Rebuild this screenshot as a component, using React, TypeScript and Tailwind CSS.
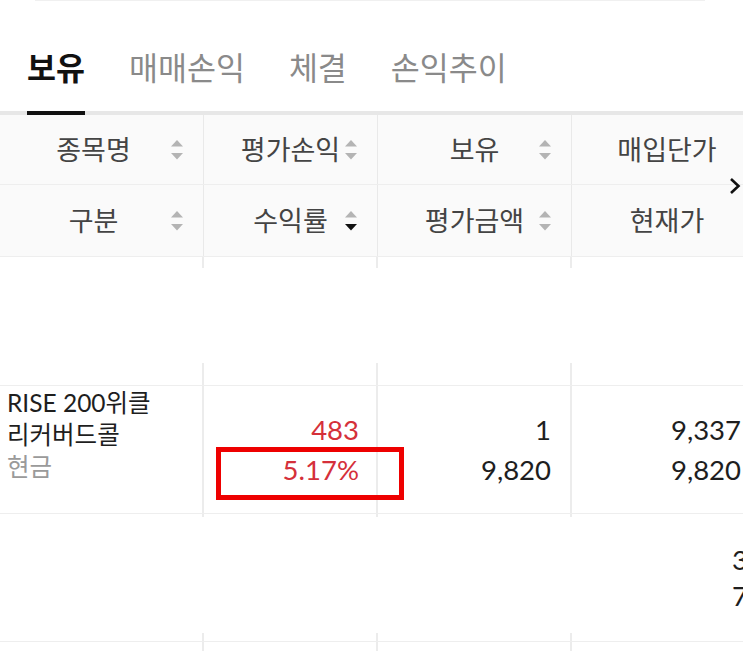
import React from "react";

const FONT = { fontFamily: "Lato, 'Noto Sans CJK KR', sans-serif" };

const tabs = ["보유", "매매손익", "체결", "손익추이"];

function SortIcon({ active = false }: { active?: boolean }) {
  return (
    <svg width="12" height="20" viewBox="0 0 12 20" className="block">
      <polygon points="6,0 12,6.5 0,6.5" fill="#b4b4b4" />
      <polygon points="0,13 12,13 6,19.5" fill={active ? "#111111" : "#b4b4b4"} />
    </svg>
  );
}

function HeadCell({
  label,
  sort,
  active,
  shift = "",
  last = false,
  tall = false,
}: {
  label: string;
  sort?: boolean;
  active?: boolean;
  shift?: string;
  last?: boolean;
  tall?: boolean;
}) {
  return (
    <div
      className={`relative flex items-center justify-center ${tall ? "h-[71px]" : "h-[69px]"} ${
        last ? "" : "border-r border-[#e9e9e9]"
      }`}
    >
      <span className={`text-[27px] leading-none text-[#444] ${shift}`}>{label}</span>
      {sort && (
        <span className="absolute right-[20px] top-1/2 -translate-y-1/2">
          <SortIcon active={active} />
        </span>
      )}
    </div>
  );
}

// empty row: cell borders only show near top and bottom edge
function GapRow({ height, top, bottom }: { height: string; top: string; bottom: string }) {
  const cols = [0, 1, 2, 3];
  return (
    <div className={`grid grid-cols-[204px_174px_194px_190px] ${height} border-b border-[#eeeeee]`}>
      {cols.map((c) => (
        <div key={c} className="flex flex-col">
          <div className={`${top} ${c < 3 ? "border-r-2 border-[#ececec]" : ""}`} />
          <div className="flex-1" />
          <div className={`${bottom} ${c < 3 ? "border-r-2 border-[#ececec]" : ""}`} />
        </div>
      ))}
    </div>
  );
}

export default function App() {
  return (
    <div className="relative w-[743px] h-[651px] overflow-hidden bg-white" style={FONT}>
      <div className="ml-[35px] w-[670px] h-px bg-[#f0f0f0]" />

      {/* tabs */}
      <div className="flex gap-[44px] pl-[27px] pt-[43px] border-b-4 border-[#e7e7e7]">
        {tabs.map((t, i) => (
          <div
            key={t}
            className={`-mb-[4px] pb-[19px] border-b-4 text-[31.5px] leading-[48px] ${
              i === 0 ? "border-[#111] font-bold text-[#111]" : "border-transparent text-[#8a8a8a]"
            }`}
          >
            {t}
          </div>
        ))}
      </div>

      <div className="w-[762px]">
        {/* header */}
        <div className="bg-[#fafafa]">
          <div className="grid grid-cols-[204px_174px_194px_190px] border-b border-[#eeeeee]">
            <HeadCell label="종목명" sort shift="-ml-[16px]" />
            <HeadCell label="평가손익" sort />
            <HeadCell label="보유" sort />
            <HeadCell label="매입단가" last />
          </div>
          <div className="grid grid-cols-[204px_174px_194px_190px] border-b border-[#eeeeee]">
            <HeadCell label="구분" sort shift="-ml-[16px]" tall />
            <HeadCell label="수익률" sort active tall />
            <HeadCell label="평가금액" sort tall />
            <HeadCell label="현재가" last tall />
          </div>
        </div>

        <GapRow height="h-[129px]" top="h-[11px]" bottom="h-[22px]" />

        {/* holding row */}
        <div className="grid grid-cols-[204px_174px_194px_190px] h-[128px] border-b border-[#eeeeee]">
          <div className="pl-[7px] pt-[1px] border-r-2 border-[#ececec] text-[24.5px] leading-[32px]">
            <div className="text-[#1e1e1e]">RISE 200위클</div>
            <div className="text-[#1e1e1e]">리커버드콜</div>
            <div className="text-[#9a9a9a]">현금</div>
          </div>
          <div className="flex flex-col justify-center items-end pr-[17px] border-r-2 border-[#ececec] text-[27.5px] leading-[40px] text-[#d5303a]">
            <div>483</div>
            <div>5.17%</div>
          </div>
          <div className="flex flex-col justify-center items-end pr-[19px] border-r-2 border-[#ececec] text-[27.5px] leading-[40px] text-[#1e1e1e]">
            <div>1</div>
            <div>9,820</div>
          </div>
          <div className="flex flex-col justify-center items-end pr-[21px] text-[27.5px] leading-[40px] text-[#1e1e1e]">
            <div>9,337</div>
            <div>9,820</div>
          </div>
        </div>

        {/* next row, mostly off screen */}
        <div className="grid grid-cols-[204px_174px_194px_190px] h-[128px] border-b border-[#eeeeee]">
          {[0, 1, 2].map((c) => (
            <div key={c} className="flex flex-col">
              <div className="h-[3px] border-r-2 border-[#ececec]" />
              <div className="flex-1" />
              <div className="h-[8px] border-r-2 border-[#ececec]" />
            </div>
          ))}
          <div className="flex flex-col justify-center pl-[160px] text-[27.5px] leading-[36px] text-[#1e1e1e]">
            <div>3</div>
            <div>7</div>
          </div>
        </div>
        <div className="grid grid-cols-[204px_174px_194px_190px] h-[20px]">
          <div className="border-r-2 border-[#ececec]" />
          <div className="border-r-2 border-[#ececec]" />
          <div className="border-r-2 border-[#ececec]" />
          <div />
        </div>
      </div>

      {/* horizontal scroll hint */}
      <svg
        width="12"
        height="18"
        viewBox="0 0 12 18"
        className="absolute left-[729px] top-[177px]"
      >
        <polyline points="2,2 9.5,9 2,16" fill="none" stroke="#111" strokeWidth="2.6" />
      </svg>

      {/* highlight box */}
      <div className="absolute left-[216px] top-[447px] w-[188px] h-[53px] border-[5px] border-[#ee0000]" />
    </div>
  );
}
